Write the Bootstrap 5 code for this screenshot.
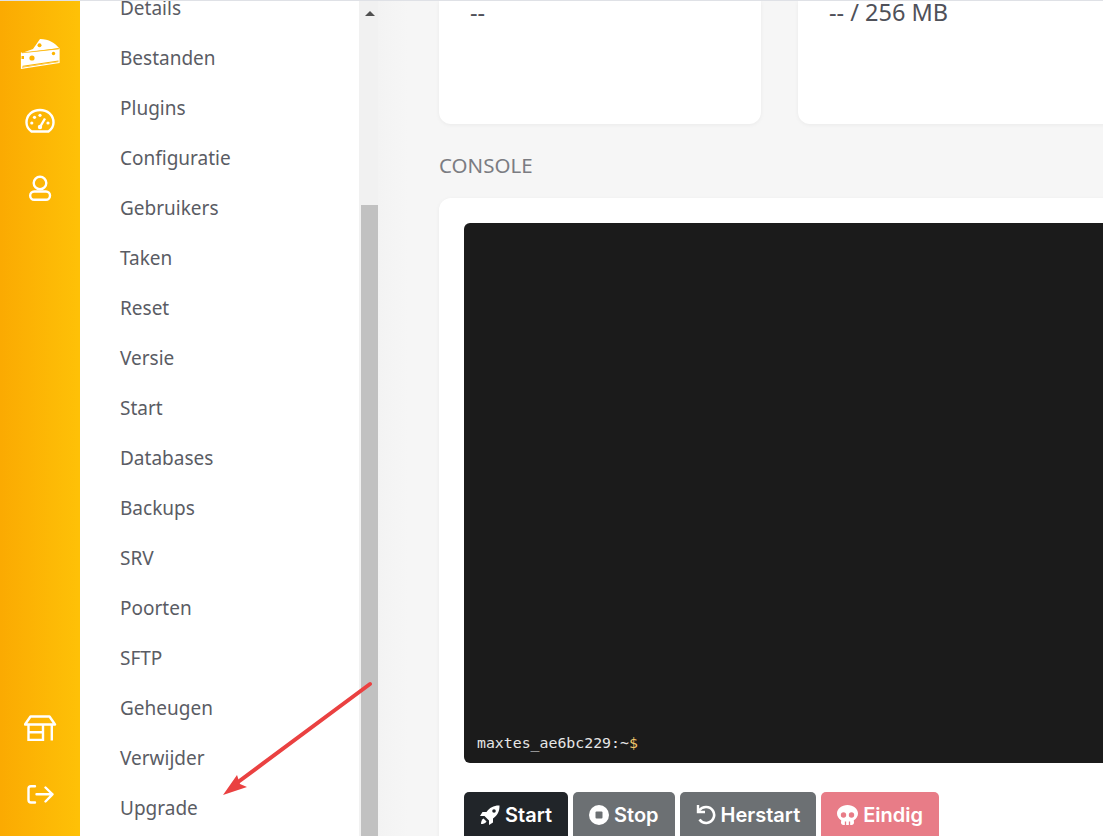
<!DOCTYPE html>
<html lang="nl">
<head>
<meta charset="utf-8">
<link href="https://cdn.jsdelivr.net/npm/bootstrap@5.3.0/dist/css/bootstrap.min.css" rel="stylesheet">
<style>
html,body{height:100%}
body{background:#f6f6f6;font-family:"Noto Sans","Open Sans",sans-serif;color:#4f5159;overflow:hidden;border-top:1px solid #dfe1e6}
.rail{width:80px;flex:none;background:linear-gradient(90deg,#fbaa02,#fec107);padding:19px 0 8px}
.rail-ic{display:flex;align-items:center;justify-content:center;width:80px;height:67px;color:#fff}
.menu-col{width:279px;flex:none;background:#fff;overflow:hidden}
.menu-list{margin-top:-18px}
.menu-link{display:block;height:50px;line-height:50px;padding:0 0 0 40px;color:#5a5c64;font-size:19px;text-decoration:none}
.sbar{width:19px;flex:none;background:#f1f1f1;padding-left:2px}
.sbar-up{height:24px;display:flex;align-items:center;justify-content:center}
.sbar-tri{width:0;height:0;border-left:5px solid transparent;border-right:5px solid transparent;border-bottom:5px solid #505050}
.sbar-thumb{margin-top:180px;height:640px;background:#c1c1c1}
.main-col{flex:none;width:800px;padding-left:61px;background:linear-gradient(90deg,#f3f3f3,#f6f6f6 30px)}
.stat{flex:none;width:322px;height:123px;background:#fff;border-radius:0 0 12px 12px;box-shadow:0 1px 4px rgba(0,0,0,.05);padding:1px 31px 0;font-size:23.500px;line-height:20px;color:#4f5159}
.sect{font-size:20.500px;line-height:24px;color:#7b7c82;margin:29px 0 21px}
.con-card{width:800px;background:#fff;border-radius:12px;box-shadow:0 1px 4px rgba(0,0,0,.05);padding:25px}
.term{height:540px;background:#1b1b1b;border-radius:6px;padding:0 13px 12px;font-family:"DejaVu Sans Mono",monospace;font-size:14.850px;line-height:16px;color:#e6e6e6}
.term-d{color:#f1c56b}
.act{border:0;border-radius:5px 5px 0 0;font-family:Inter,"Noto Sans",sans-serif;font-size:20px;font-weight:600;color:#fff;display:inline-flex;align-items:center;gap:5px;padding:0 16px;height:46px}
.act svg{flex:none}
.a-dark{background:#212529}.a-gray{background:#6c7073}.a-red{background:#e87c87}
.arrow{position:absolute;left:222px;top:681px}
</style>
</head>
<body>
<div class="d-flex h-100">
<aside class="rail d-flex flex-column justify-content-between">
<div>
<a class="rail-ic" href="#"><svg width="40" height="32" viewBox="20 37 40 32"><path d="M22 52 33 48 40 38C49 38 55 42 59 47Z" fill="#fff"/><path d="M22 52 59 48V60.500L22 66Z" fill="#fff"/><path d="M21.500 51.500V67.300L59 61.500V47.500" fill="none" stroke="#fff" stroke-width="1.200"/><path d="M22.500 65.300 58.500 60" fill="none" stroke="#fdb400" stroke-width="1"/><path d="M22 51.800 59 47.800" fill="none" stroke="#fdb400" stroke-width=".7"/><circle cx="39.500" cy="44.300" r="2" fill="#fdb400"/><circle cx="32" cy="57" r="2.600" fill="#fdb400"/><circle cx="53.500" cy="52.500" r="1.700" fill="#fdb400"/><path d="M21.500 55h2.500v3h-2.500z" fill="#fdb400"/></svg></a>
<a class="rail-ic" href="#"><svg width="30" height="25" viewBox="25 108 30 25" fill="none" stroke="#fff"><path d="M31.500 131.500C28 129 26.500 126 26.500 122.500 26.500 115 32.500 110 40 110S53.500 115 53.500 122.500C53.500 126 52 129 48.500 131.500Z" stroke-width="2.400"/><circle cx="31.800" cy="123" r="1.600" fill="#fff" stroke="none"/><circle cx="34.500" cy="117.300" r="1.600" fill="#fff" stroke="none"/><circle cx="40" cy="115.300" r="1.600" fill="#fff" stroke="none"/><circle cx="48" cy="123" r="1.600" fill="#fff" stroke="none"/><path d="M40 127 45 118.500" stroke-width="2.400"/><circle cx="40" cy="127" r="2.200" fill="#fff" stroke="none"/></svg></a>
<a class="rail-ic" href="#"><svg width="24" height="26" viewBox="0 0 24 26" fill="none" stroke="#fff" stroke-width="2.400"><circle cx="12" cy="8" r="6.300"/><rect x="2.200" y="16.500" width="19.800" height="8.300" rx="4"/></svg></a>
</div>
<div>
<a class="rail-ic" href="#"><svg width="33" height="26" viewBox="24 714.500 33 26" fill="none" stroke="#fff" stroke-width="2.400"><path d="M25 724 30.500 716H49.500L55 724Z" stroke-linejoin="round"/><path d="M28.500 724V739.500H43V724M51.800 724V740M28.500 731.800H43"/></svg></a>
<a class="rail-ic" href="#"><svg width="27" height="19" viewBox="26.500 785.500 27 19" fill="none" stroke="#fff" stroke-width="2.400" stroke-linecap="round" stroke-linejoin="round"><path d="M34.500 786.700H30.500C28.500 786.700 28 788 28 789V800.500C28 801.800 28.700 803 30.500 803H34.500M36 794.800H52M45 788 52 794.800 45 802"/></svg></a>
</div>
</aside>
<nav class="menu-col">
<div class="nav flex-column menu-list">
<a class="menu-link" href="#">Details</a>
<a class="menu-link" href="#">Bestanden</a>
<a class="menu-link" href="#">Plugins</a>
<a class="menu-link" href="#">Configuratie</a>
<a class="menu-link" href="#">Gebruikers</a>
<a class="menu-link" href="#">Taken</a>
<a class="menu-link" href="#">Reset</a>
<a class="menu-link" href="#">Versie</a>
<a class="menu-link" href="#">Start</a>
<a class="menu-link" href="#">Databases</a>
<a class="menu-link" href="#">Backups</a>
<a class="menu-link" href="#">SRV</a>
<a class="menu-link" href="#">Poorten</a>
<a class="menu-link" href="#">SFTP</a>
<a class="menu-link" href="#">Geheugen</a>
<a class="menu-link" href="#">Verwijder</a>
<a class="menu-link" href="#">Upgrade</a>
</div>
</nav>
<div class="sbar"><div class="sbar-up"><span class="sbar-tri"></span></div><div class="sbar-thumb"></div></div>
<main class="main-col">
<div class="d-flex" style="gap:37px">
<div class="stat">--</div>
<div class="stat">-- / 256 MB</div>
</div>
<div class="sect">CONSOLE</div>
<div class="con-card">
<div class="term d-flex align-items-end"><div>maxtes_ae6bc229:~<span class="term-d">$</span></div></div>
<div class="d-flex" style="gap:5px;margin-top:29px">
<button class="act a-dark"><svg width="20" height="20" viewBox="0 0 20 20" fill="#fff"><path d="M19.500.5C14 .3 9.500 2.500 6.500 7H2.500L0 11H4.500L9 15.500V20L13 17.500V13.500C17.500 10.500 19.700 6 19.500.5Z"/><path d="M3.500 13.500C1.500 14.500 1 17 1 19 3 19 5.500 18.500 6.500 16.500Z"/><circle cx="14" cy="6" r="1.800" fill="#212529"/></svg>Start</button>
<button class="act a-gray"><svg width="20" height="20" viewBox="0 0 20 20"><circle cx="10" cy="10" r="10" fill="#fff"/><rect x="6.500" y="6.500" width="7" height="7" rx="1" fill="#6c7073"/></svg>Stop</button>
<button class="act a-gray"><svg width="20" height="20" viewBox="0 0 20 20" fill="none" stroke="#fff" stroke-width="2.600"><path d="M3 5.500C5 3 7.500 2 10 2a8 8 0 1 1-6.500 12.500"/><path d="M2 0V7H9" stroke-width="2.400"/></svg>Herstart</button>
<button class="act a-red"><svg width="21" height="20" viewBox="0 0 21 20" fill="#fff"><path d="M10.500 0C4.700 0 0 3.800 0 8.500c0 2.800 1.600 5.200 4.200 6.800L4 17.500C4 18.900 5 20 6.300 20H14.700C16 20 17 18.900 17 17.500L16.800 15.300C19.400 13.700 21 11.300 21 8.500 21 3.800 16.300 0 10.500 0Z"/><circle cx="6.500" cy="10" r="2.700" fill="#e87c87"/><circle cx="14.500" cy="10" r="2.700" fill="#e87c87"/><path d="M8.500 16.500V20M12.500 16.500V20" stroke="#e87c87" stroke-width="1.300"/></svg>Eindig</button>
</div>
</div>
</main>
</div>
<svg class="arrow" width="152" height="118" viewBox="0 0 152 118"><path d="M148 3 12 104" stroke="#ea4141" stroke-width="4" stroke-linecap="round"/><path d="M1 114 15 94 18 103 25 106z" fill="#ea4141"/></svg>
<script src="https://cdn.jsdelivr.net/npm/bootstrap@5.3.0/dist/js/bootstrap.bundle.min.js"></script>
</body>
</html>
